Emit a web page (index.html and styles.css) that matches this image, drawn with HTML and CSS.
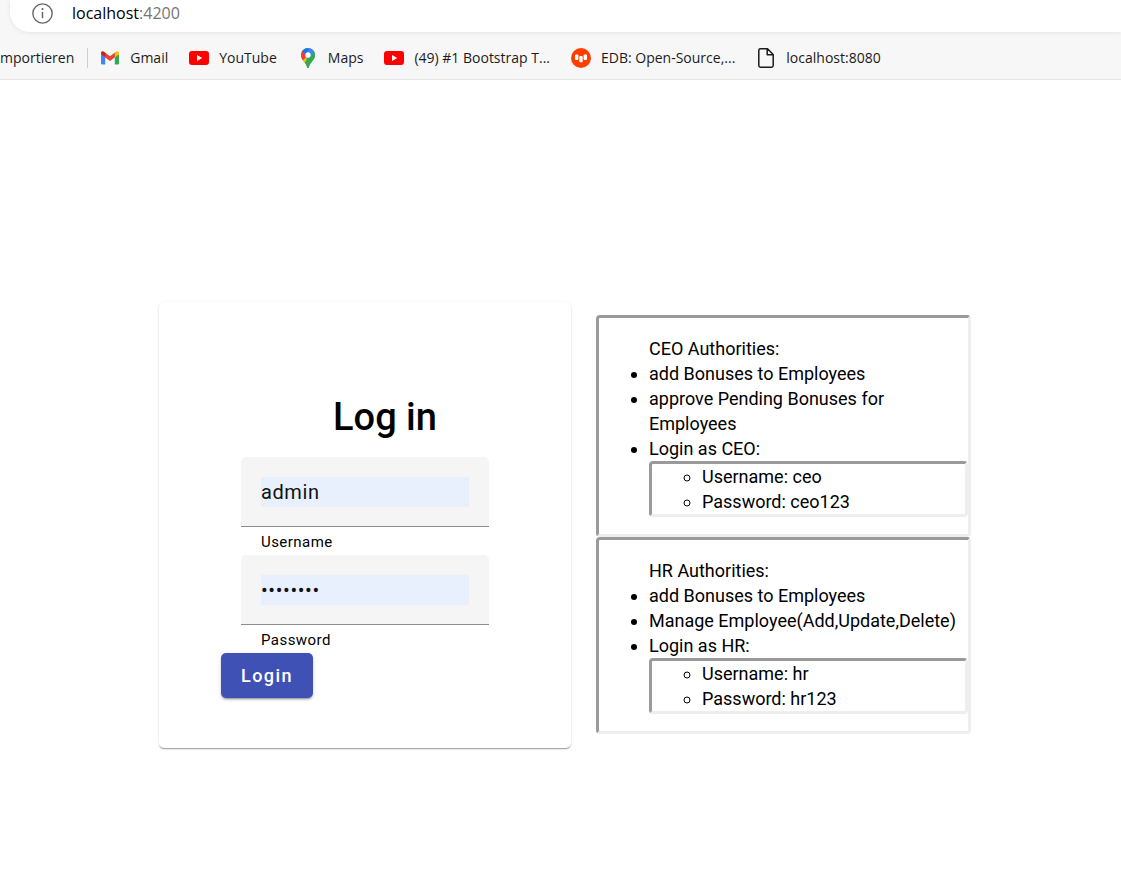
FILE: index.html
```html
<!DOCTYPE html>
<html lang="en">
<head>
<meta charset="utf-8">
<meta name="viewport" content="width=device-width, initial-scale=1">
<title>Log in</title>
<link rel="stylesheet" href="styles.css">
</head>
<body>
<header class="browser">
  <div class="address">
    <svg class="info" viewBox="0 0 20 20" aria-hidden="true"><circle cx="10" cy="10" r="9.2" fill="none" stroke="#666" stroke-width="1.3"/><path d="M10 8.5v6" stroke="#666" stroke-width="1.4"/><circle cx="10" cy="5.8" r="1" fill="#666"/></svg>
    <span class="url">localhost<span class="port">:4200</span></span>
  </div>
  <nav class="bookmarks" aria-label="Bookmarks">
    <a class="bookmark import" href="#">mportieren</a>
    <a class="bookmark" href="#">
      <svg class="icon" viewBox="0 0 20 20" aria-hidden="true"><path fill="#4285f4" d="M1 6l4.200 3v7.500H2.300A1.300 1.300 0 0 1 1 15.200z"/><path fill="#34a853" d="M19 6l-4.200 3v7.500h2.900a1.300 1.300 0 0 0 1.300-1.300z"/><path fill="#ea4335" d="M5 4.500l5 3.800 5-3.800V9.200L10 13 5 9.200z"/><path fill="#c5221f" d="M1 5.300C1 3.300 3 2.800 4.300 3.900L5.200 4.600v4.700L1 6.300z"/><path fill="#fbbc04" d="M19 5.300c0-2-2-2.500-3.300-1.400l-.9.7v4.700L19 6.300z"/></svg>
      Gmail</a>
    <a class="bookmark" href="#">
      <svg class="icon" viewBox="0 0 20 20" aria-hidden="true"><rect y="3" width="20" height="14" rx="3" fill="#f00"/><path d="M8 7l5.200 3L8 13z" fill="#fff"/></svg>
      YouTube</a>
    <a class="bookmark" href="#">
      <svg class="icon" viewBox="0 0 20 20" aria-hidden="true"><clipPath id="pin"><path d="M10 0a7 7 0 0 0-7 7c0 5 4.500 6.500 6.200 12.200.2 1.100 1.400 1.100 1.600 0C12.500 13.500 17 12 17 7a7 7 0 0 0-7-7z"/></clipPath><g clip-path="url(#pin)"><path fill="#34a853" d="M0 0h20v20H0z"/><path fill="#fbbc04" d="M2 9L10 7l3 2-7 9-5-4z"/><path fill="#ea4335" d="M0 0l5 2 5 5-5.500 6L0 9z"/><path fill="#1a73e8" d="M4 3L8-1l4 2-3 5-2 0z"/><path fill="#4285f4" d="M8 0h10v4l-8 9-2-2 3-4-3-1 3-5z"/><path fill="#34a853" d="M16.200 3.500L7 14v6h12V3z"/></g><circle cx="10" cy="7" r="2.700" fill="#fff"/></svg>
      Maps</a>
    <a class="bookmark" href="#">
      <svg class="icon" viewBox="0 0 20 20" aria-hidden="true"><rect y="3" width="20" height="14" rx="3" fill="#f00"/><path d="M8 7l5.200 3L8 13z" fill="#fff"/></svg>
      (49) #1 Bootstrap T...</a>
    <a class="bookmark" href="#">
      <svg class="icon" viewBox="0 0 20 20" aria-hidden="true"><circle cx="10" cy="10" r="10" fill="#ff3e00"/><g fill="#fff"><rect x="4" y="6.500" width="3.400" height="5.500" rx="1"/><rect x="8.300" y="8" width="3.400" height="6.200" rx="1"/><rect x="12.600" y="6.500" width="3.400" height="5.500" rx="1"/></g></svg>
      EDB: Open-Source,...</a>
    <a class="bookmark" href="#">
      <svg class="icon" viewBox="0 0 20 20" aria-hidden="true"><path d="M4.500.8h7L17.200 6.500v11a1.700 1.700 0 0 1-1.700 1.700h-11a1.700 1.700 0 0 1-1.700-1.700v-15A1.700 1.700 0 0 1 4.500.8zM11.200 1v5.800h5.800" fill="none" stroke="#1b1b1b" stroke-width="1.500" stroke-linejoin="round"/></svg>
      localhost:8080</a>
  </nav>
</header>
<main class="page">
  <form class="card">
    <h1 class="title">Log in</h1>
    <div class="field">
      <div class="box"><input class="input" id="username" type="text" value="admin"></div>
      <label class="label" for="username">Username</label>
    </div>
    <div class="field">
      <div class="box"><input class="input" id="password" type="password" value="admin123"></div>
      <label class="label" for="password">Password</label>
    </div>
    <button class="login" type="button">Login</button>
  </form>
  <section class="roles">
    <div class="role">
      <p class="heading">CEO Authorities:</p>
      <ul class="list">
        <li>add Bonuses to Employees</li>
        <li>approve Pending Bonuses for Employees</li>
        <li>Login as CEO:
          <ul class="credentials">
            <li>Username: ceo</li>
            <li>Password: ceo123</li>
          </ul>
        </li>
      </ul>
    </div>
    <div class="role">
      <p class="heading">HR Authorities:</p>
      <ul class="list">
        <li>add Bonuses to Employees</li>
        <li>Manage Employee(Add,Update,Delete)</li>
        <li>Login as HR:
          <ul class="credentials">
            <li>Username: hr</li>
            <li>Password: hr123</li>
          </ul>
        </li>
      </ul>
    </div>
  </section>
</main>
</body>
</html>
```
FILE: styles.css
```css
* { box-sizing: border-box; }

body {
  margin: 0;
  min-height: 100vh;
  display: flex;
  flex-direction: column;
  background: #fff;
  color: #000;
  font-family: Roboto, "Liberation Sans", sans-serif;
  font-size: 18px;
  line-height: 25px;
}

.browser {
  background: #f7f7f7;
  border-bottom: 1px solid #e5e5e5;
  font-family: "Open Sans", "Noto Sans", sans-serif;
}

.address {
  display: flex;
  align-items: center;
  gap: 19px;
  height: 32px;
  margin-left: 10px;
  padding: 0 0 5px 22px;
  background: #fff;
  border-bottom-left-radius: 20px;
  box-shadow: 0 1px 4px rgba(0, 0, 0, 0.08);
}

.info { width: 21px; height: 21px; }
.url { font-size: 16px; }
.port { color: #757575; }

.bookmarks {
  display: flex;
  align-items: center;
  gap: 21px;
  height: 47px;
  padding-top: 4px;
  white-space: nowrap;
  overflow: hidden;
}

.bookmark {
  display: flex;
  align-items: center;
  gap: 10px;
  color: #1b1b1b;
  font-size: 14px;
  line-height: 20px;
  text-decoration: none;
}

.import {
  margin-right: -9px;
  padding-right: 13px;
  border-right: 1px solid #cfcfcf;
}

.icon { width: 20px; height: 20px; flex: none; }

.page {
  flex: 1;
  display: flex;
  justify-content: center;
  align-items: center;
  gap: 25px;
  padding: 90px 0 0 9px;
}

.card {
  flex: 0 1 412px;
  padding: 90px 62px 50px;
  border-radius: 5px;
  background: #fff;
  box-shadow: 0 2px 1px -1px rgba(0, 0, 0, 0.2), 0 1px 1px rgba(0, 0, 0, 0.14), 0 1px 3px rgba(0, 0, 0, 0.12);
}

.title {
  margin: 0 0 15px 40px;
  font-size: 38px;
  font-weight: 500;
  line-height: 50px;
  text-align: center;
}

.field { margin: 0 20px; }

.box {
  height: 70px;
  padding: 20px;
  background: #f5f5f5;
  border-bottom: 1px solid #8c8c8c;
  border-radius: 5px 5px 0 0;
}

.input {
  display: block;
  width: 100%;
  height: 30px;
  padding: 0;
  border: 0;
  background: #e8f0fe;
  color: #111;
  font-family: inherit;
  font-size: 20px;
  letter-spacing: 0.03em;
}

.label {
  display: block;
  height: 28px;
  padding-left: 20px;
  font-size: 15px;
  line-height: 30px;
  letter-spacing: 0.03em;
}

.login {
  display: block;
  height: 45px;
  padding: 0 20px;
  border: 0;
  border-radius: 5px;
  background: #3f51b5;
  color: #fff;
  font-family: inherit;
  font-size: 18px;
  font-weight: 500;
  letter-spacing: 0.08em;
  box-shadow: 0 3px 1px -2px rgba(0, 0, 0, 0.2), 0 2px 2px rgba(0, 0, 0, 0.14), 0 1px 5px rgba(0, 0, 0, 0.12);
}

.roles { flex: 0 1 375px; }

.role {
  padding: 18px 0 17px 50px;
  border: 3px inset #eee;
  border-radius: 4px;
}

.heading { margin: 0; }

.list { margin: 0; padding: 0; list-style: disc; }

.credentials {
  margin: 0;
  padding: 0 0 0 50px;
  border: 3px inset #eee;
  border-radius: 4px;
  list-style: circle;
}
```
